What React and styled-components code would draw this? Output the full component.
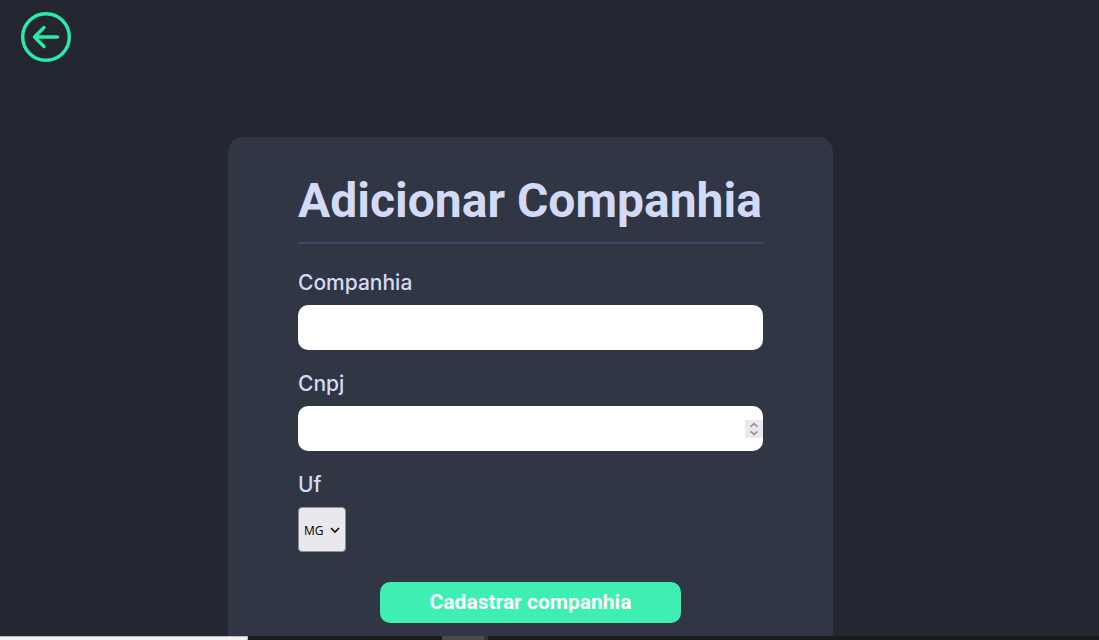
import React from "react";
import styled, { createGlobalStyle } from "styled-components";

const GlobalStyle = createGlobalStyle`
  *, *::before, *::after {
    box-sizing: border-box;
    margin: 0;
    padding: 0;
  }
  body {
    background: #242731;
    font-family: Inter, "Open Sans", sans-serif;
  }
`;

const Screen = styled.div`
  display: flex;
  flex-direction: column;
  height: 100vh;
  overflow: hidden;
`;

const Page = styled.div`
  flex: 1;
  min-height: 0;
  overflow: hidden;
`;

const Header = styled.header`
  display: flex;
  padding: 12px 21px;
`;

const BackLink = styled.a`
  display: flex;
  color: #28eda7;
`;

const Main = styled.main`
  display: flex;
  justify-content: center;
  padding: 63px 38px 0 0;
`;

const Form = styled.form`
  display: flex;
  flex-direction: column;
  gap: 20px;
  width: 100%;
  max-width: 605px;
  padding: 35px 70px;
  border-radius: 15px;
  background: #303643;
`;

const Title = styled.h1`
  margin-bottom: 5px;
  padding-bottom: 12px;
  border-bottom: 2px solid #41456a;
  color: #d3daf8;
  font: 700 48px/58px Roboto, sans-serif;
`;

const Field = styled.div`
  display: flex;
  flex-direction: column;
  align-items: flex-start;
  gap: 8px;
`;

const Label = styled.label`
  color: #d3daf8;
  font-size: 21px;
  font-weight: 500;
  line-height: 28px;
`;

const Control = styled.div`
  position: relative;
  display: flex;
  width: ${({ $fit }) => ($fit ? "auto" : "100%")};
`;

const Input = styled.input`
  width: 100%;
  height: 45px;
  padding: 0 20px 0 12px;
  border: 0;
  border-radius: 10px;
  background: #fff;
  font-size: 16px;
  appearance: textfield;
  &::-webkit-inner-spin-button,
  &::-webkit-outer-spin-button {
    appearance: none;
  }
`;

const Spinner = styled.span`
  position: absolute;
  right: 0;
  top: 14px;
  display: flex;
  width: 18px;
  height: 18px;
  background: #e9e9ed;
  color: #8c8c92;
  pointer-events: none;
`;

const Select = styled.select`
  appearance: none;
  width: 48px;
  height: 45px;
  padding: 2px 0 0 5px;
  border: 1px solid #8f8f9d;
  border-radius: 4px;
  background: #e9e9ed;
  color: #000;
  font: 400 12px "Open Sans", sans-serif;
`;

const Chevron = styled.svg`
  position: absolute;
  right: 6px;
  top: 18px;
  pointer-events: none;
`;

const Submit = styled.button`
  align-self: center;
  height: 41px;
  margin-top: 10px;
  padding: 0 50px 2px;
  border: 0;
  border-radius: 10px;
  background: #3eeeb3;
  color: #fff;
  font: 700 21px Roboto, sans-serif;
`;

const Taskbar = styled.footer`
  display: flex;
  flex: none;
  height: 4px;
  background: #1b1a1b;
`;

const SearchBox = styled.div`
  width: 248px;
  border: solid #bcbcbc;
  border-width: 1px 1px 0 0;
  background: #f3f3f3;
`;

const TaskItem = styled.div`
  width: 46px;
  margin-left: 194px;
  border-right: 4px solid #353535;
  background: #4a4a4a;
`;

export default function App() {
  return (
    <Screen>
      <GlobalStyle />
      <Page>
        <Header>
          <BackLink href="#" aria-label="Voltar">
            <svg width="50" height="50" viewBox="0 0 50 50" fill="none" stroke="currentColor" strokeWidth="3.4" strokeLinecap="round" strokeLinejoin="round">
              <circle cx="25" cy="25" r="23.3" />
              <path d="M36.5 25H13.5M23 15.5L13.5 25L23 34.5" />
            </svg>
          </BackLink>
        </Header>
        <Main>
          <Form onSubmit={(e) => e.preventDefault()}>
            <Title>Adicionar Companhia</Title>
            <Field>
              <Label htmlFor="companhia">Companhia</Label>
              <Control>
                <Input id="companhia" type="text" />
              </Control>
            </Field>
            <Field>
              <Label htmlFor="cnpj">Cnpj</Label>
              <Control>
                <Input id="cnpj" type="number" />
                <Spinner>
                  <svg width="18" height="18" viewBox="0 0 18 18" fill="none" stroke="currentColor" strokeWidth="1.5">
                    <path d="M5.5 6.8L9 3.6L12.5 6.8M5.5 11.4L9 14.6L12.5 11.4" />
                  </svg>
                </Spinner>
              </Control>
            </Field>
            <Field>
              <Label htmlFor="uf">Uf</Label>
              <Control $fit>
                <Select id="uf" defaultValue="MG">
                  <option>MG</option>
                  <option>SP</option>
                  <option>RJ</option>
                  <option>ES</option>
                </Select>
                <Chevron width="10" height="10" viewBox="0 0 10 10" fill="none" stroke="#111" strokeWidth="1.7">
                  <path d="M1 3L5 7L9 3" />
                </Chevron>
              </Control>
            </Field>
            <Submit type="submit">Cadastrar companhia</Submit>
          </Form>
        </Main>
      </Page>
      <Taskbar>
        <SearchBox />
        <TaskItem />
      </Taskbar>
    </Screen>
  );
}
